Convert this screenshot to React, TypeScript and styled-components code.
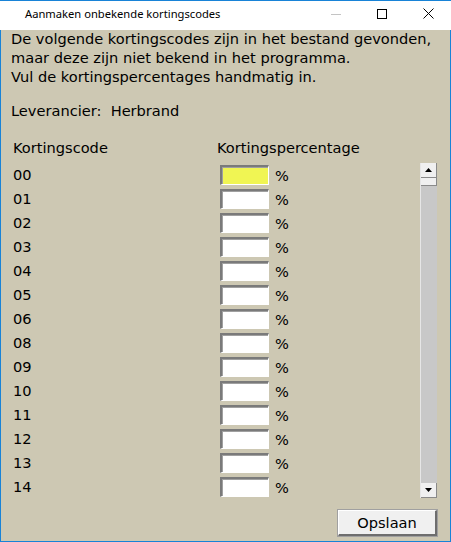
import React from "react";
import styled, { createGlobalStyle } from "styled-components";

const Global = createGlobalStyle`
  html, body {
    margin: 0;
    padding: 0;
    background: #ffffff;
  }
`;

const Window = styled.div`
  width: 451px;
  height: 542px;
  box-sizing: border-box;
  border: 1px solid #1883d7;
  border-top: none;
  display: flex;
  flex-direction: column;
  background: #cdc8b3;
  font-family: "DejaVu Sans", Verdana, sans-serif;
  color: #000;
`;

const TitleBar = styled.div`
  height: 29px;
  margin: 0 -1px;
  background: #fff;
  border-top: 1px solid #1883d7;
  display: flex;
  align-items: center;
`;

const Title = styled.div`
  flex: 1;
  padding-left: 25px;
  font-family: "Noto Sans", "Open Sans", sans-serif;
  font-size: 11.2px;
  color: #000;
  padding-bottom: 5px;
`;

const Control = styled.div`
  width: 46px;
  height: 29px;
  display: flex;
  align-items: center;
  justify-content: center;
  padding-bottom: 4px;
  box-sizing: border-box;
`;

const Body = styled.div`
  flex: 1;
  display: flex;
  flex-direction: column;
  padding: 0 13px 0 10px;
  font-size: 14.6px;
`;

const Intro = styled.div`
  line-height: 19px;
  margin-top: -1px;
`;

const Supplier = styled.div`
  line-height: 19px;
  margin-top: 15px;
  white-space: pre;
`;

const Header = styled.div`
  display: flex;
  height: 20px;
  line-height: 20px;
  margin-top: 18px;
  padding-left: 2px;
`;

const HeadCell = styled.div<{ $w?: number }>`
  width: ${(p) => (p.$w ? `${p.$w}px` : "auto")};
`;

const ListArea = styled.div`
  display: flex;
  margin-top: 5px;
`;

const Rows = styled.div`
  flex: 1;
  padding-left: 2px;
`;

const Row = styled.div`
  display: flex;
  align-items: center;
  height: 24px;
`;

const Code = styled.div`
  width: 207px;
  margin-top: -2px;
`;

const Input = styled.div<{ $active?: boolean }>`
  width: 49px;
  height: 20px;
  box-sizing: border-box;
  border-style: solid;
  border-width: 2px 1px 1px 2px;
  border-color: #7a7a7a #ffffff #ffffff #7a7a7a;
  box-shadow: inset 1px 1px 0 #a0a0a0;
  background: ${(p) => (p.$active ? "#f0f553" : "#ffffff")};
`;

const Pct = styled.div`
  margin-left: 6px;
`;

const ScrollBar = styled.div`
  width: 17px;
  height: 335px;
  display: flex;
  flex-direction: column;
  background: #c8c8c8;
  border-left: 1px solid #e6e6e6;
  box-sizing: border-box;
`;

const ArrowButton = styled.div`
  height: 15px;
  background: #f0f0f0;
  border-right: 1px solid #8a8a8a;
  border-bottom: 1px solid #8a8a8a;
  box-sizing: border-box;
  display: flex;
  align-items: center;
  justify-content: center;
`;

const Thumb = styled.div`
  height: 8px;
  background: #f0f0f0;
  border-right: 1px solid #8a8a8a;
  border-bottom: 1px solid #8a8a8a;
  box-sizing: border-box;
`;

const Track = styled.div`
  flex: 1;
`;

const Footer = styled.div`
  display: flex;
  justify-content: flex-end;
  margin-top: 11px;
`;

const Button = styled.div`
  width: 99px;
  height: 26px;
  box-sizing: border-box;
  background: #f0f0f0;
  border: 1px solid #fff;
  border-right: 2px solid #6e6e6e;
  border-bottom: 2px solid #6e6e6e;
  outline: 1px solid #a0a0a0;
  display: flex;
  align-items: center;
  justify-content: center;
  font-size: 14.6px;
`;

const codes = ["00", "01", "02", "03", "04", "05", "06", "08", "09", "10", "11", "12", "13", "14"];

export default function App() {
  return (
    <>
      <Global />
      <Window>
        <TitleBar>
          <Title>Aanmaken onbekende kortingscodes</Title>
          <Control>
            <svg width="10" height="10" viewBox="0 0 10 10">
              <path d="M0 5.5h10" stroke="#c4c4c4" strokeWidth="1" />
            </svg>
          </Control>
          <Control>
            <svg width="10" height="10" viewBox="0 0 10 10">
              <rect x="0.5" y="0.5" width="9" height="9" fill="none" stroke="#000" strokeWidth="1" />
            </svg>
          </Control>
          <Control>
            <svg width="11" height="11" viewBox="0 0 11 11">
              <path d="M0.5 0.5l10 10M10.5 0.5l-10 10" stroke="#000" strokeWidth="1" />
            </svg>
          </Control>
        </TitleBar>
        <Body>
          <Intro>
            De volgende kortingscodes zijn in het bestand gevonden,
            <br />
            maar deze zijn niet bekend in het programma.
            <br />
            Vul de kortingspercentages handmatig in.
          </Intro>
          <Supplier>Leverancier:  Herbrand</Supplier>
          <Header>
            <HeadCell $w={204}>Kortingscode</HeadCell>
            <HeadCell>Kortingspercentage</HeadCell>
          </Header>
          <ListArea>
            <Rows>
              {codes.map((c, i) => (
                <Row key={c}>
                  <Code>{c}</Code>
                  <Input $active={i === 0} />
                  <Pct>%</Pct>
                </Row>
              ))}
            </Rows>
            <ScrollBar>
              <ArrowButton>
                <svg width="7" height="4" viewBox="0 0 7 4">
                  <path d="M3.5 0L7 4H0z" fill="#000" />
                </svg>
              </ArrowButton>
              <Thumb />
              <Track />
              <ArrowButton>
                <svg width="7" height="4" viewBox="0 0 7 4">
                  <path d="M0 0h7L3.5 4z" fill="#000" />
                </svg>
              </ArrowButton>
            </ScrollBar>
          </ListArea>
          <Footer>
            <Button>Opslaan</Button>
          </Footer>
        </Body>
      </Window>
    </>
  );
}
